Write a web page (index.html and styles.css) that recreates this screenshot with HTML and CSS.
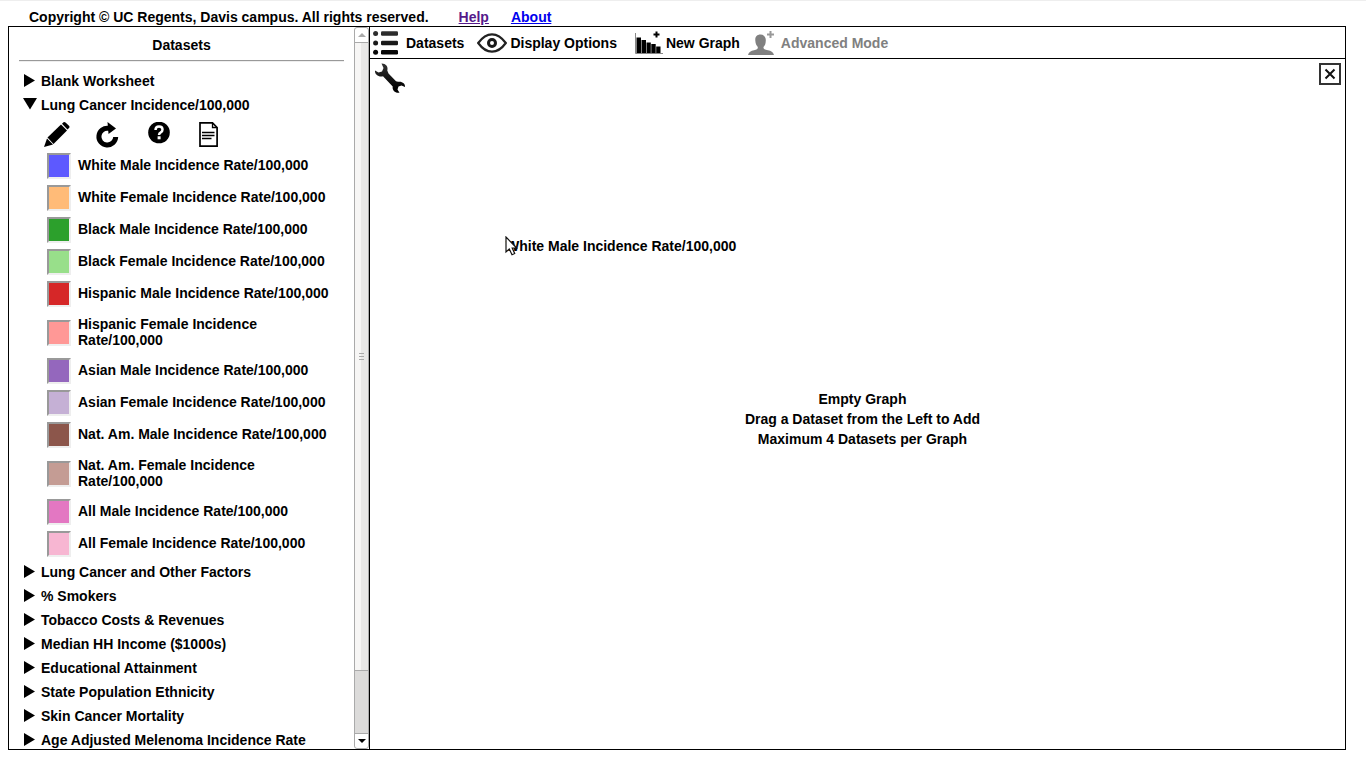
FILE: index.html
```html
<!DOCTYPE html>
<html lang="en">
<head>
<meta charset="utf-8">
<title>Datasets</title>
<link rel="stylesheet" href="styles.css">
</head>
<body>
<header class="top">
  <span class="copy">Copyright © UC Regents, Davis campus. All rights reserved.</span>
  <a class="visited" href="#help">Help</a>
  <a href="#about">About</a>
</header>
<div class="app">
  <aside class="side">
    <div class="list">
      <h2 class="title">Datasets</h2>
      <hr class="rule">
      <button class="cat"><svg class="tri" viewBox="0 0 14 14"><path d="M1 0L12 6.500L1 13Z"/></svg>Blank Worksheet</button>
      <button class="cat" aria-expanded="true"><svg class="tri" viewBox="0 0 14 14"><path d="M0 0H14L7 11.500Z"/></svg>Lung Cancer Incidence/100,000</button>
      <div class="tools">
        <button aria-label="Edit"><svg viewBox="0 0 26 26"><path d="M0 25L3 16.500L9 22.500Z"/><path d="M3.500 15.500L17 2.500L23 8.500L9.500 22Z"/><path d="M18 1.700L19.500 .3Q20.500 -.3 21.500 .5L25 3.800Q26 5 25 6L23.500 7.500Z"/></svg></button>
        <button aria-label="Reload"><svg viewBox="0 0 26 26"><path d="M15 6.300L13.500 6.300A8.400 8.400 0 1 0 20.700 15" fill="none" stroke="#000" stroke-width="5"/><path d="M12.500 0L21 6.500L13.500 12Z"/></svg></button>
        <button aria-label="About this dataset"><svg viewBox="0 0 26 26"><circle cx="13" cy="10.500" r="10.800"/><path d="M9.500 8Q9.500 4.500 13 4.500T16.500 7.500Q16.500 9.500 14.800 10.300T13 13" fill="none" stroke="#fff" stroke-width="2.500"/><rect x="11.600" y="14.300" width="3" height="3" fill="#fff"/></svg></button>
        <button aria-label="Worksheet"><svg viewBox="0 0 26 26"><path d="M3 .9H15.500L20.100 5.500V24.100H3Z" fill="#fff" stroke="#000" stroke-width="1.700"/><path d="M15.500 1V5.500H20M5 10.500H17.500M5 13.500H17.500M5 16.500H14.500" fill="none" stroke="#000" stroke-width="1.300"/></svg></button>
      </div>
      <div class="set"><button id="s1" class="swatch c1"></button><label for="s1">White Male Incidence Rate/100,000</label></div>
      <div class="set"><button id="s2" class="swatch c2"></button><label for="s2">White Female Incidence Rate/100,000</label></div>
      <div class="set"><button id="s3" class="swatch c3"></button><label for="s3">Black Male Incidence Rate/100,000</label></div>
      <div class="set"><button id="s4" class="swatch c4"></button><label for="s4">Black Female Incidence Rate/100,000</label></div>
      <div class="set"><button id="s5" class="swatch c5"></button><label for="s5">Hispanic Male Incidence Rate/100,000</label></div>
      <div class="set tall"><button id="s6" class="swatch c6"></button><label for="s6">Hispanic Female Incidence Rate/100,000</label></div>
      <div class="set"><button id="s7" class="swatch c7"></button><label for="s7">Asian Male Incidence Rate/100,000</label></div>
      <div class="set"><button id="s8" class="swatch c8"></button><label for="s8">Asian Female Incidence Rate/100,000</label></div>
      <div class="set"><button id="s9" class="swatch c9"></button><label for="s9">Nat. Am. Male Incidence Rate/100,000</label></div>
      <div class="set tall"><button id="s10" class="swatch c10"></button><label for="s10">Nat. Am. Female Incidence Rate/100,000</label></div>
      <div class="set"><button id="s11" class="swatch c11"></button><label for="s11">All Male Incidence Rate/100,000</label></div>
      <div class="set"><button id="s12" class="swatch c12"></button><label for="s12">All Female Incidence Rate/100,000</label></div>
      <button class="cat"><svg class="tri" viewBox="0 0 14 14"><path d="M1 0L12 6.500L1 13Z"/></svg>Lung Cancer and Other Factors</button>
      <button class="cat"><svg class="tri" viewBox="0 0 14 14"><path d="M1 0L12 6.500L1 13Z"/></svg>% Smokers</button>
      <button class="cat"><svg class="tri" viewBox="0 0 14 14"><path d="M1 0L12 6.500L1 13Z"/></svg>Tobacco Costs &amp; Revenues</button>
      <button class="cat"><svg class="tri" viewBox="0 0 14 14"><path d="M1 0L12 6.500L1 13Z"/></svg>Median HH Income ($1000s)</button>
      <button class="cat"><svg class="tri" viewBox="0 0 14 14"><path d="M1 0L12 6.500L1 13Z"/></svg>Educational Attainment</button>
      <button class="cat"><svg class="tri" viewBox="0 0 14 14"><path d="M1 0L12 6.500L1 13Z"/></svg>State Population Ethnicity</button>
      <button class="cat"><svg class="tri" viewBox="0 0 14 14"><path d="M1 0L12 6.500L1 13Z"/></svg>Skin Cancer Mortality</button>
      <button class="cat"><svg class="tri" viewBox="0 0 14 14"><path d="M1 0L12 6.500L1 13Z"/></svg>Age Adjusted Melenoma Incidence Rate</button>
    </div>
    <div class="scroll" aria-hidden="true">
      <div class="arrow up"><svg viewBox="0 0 8 4"><path d="M0 4L4 0L8 4Z" fill="#aaa"/></svg></div>
      <div class="thumb"><i></i><i></i><i></i></div>
      <div class="track"></div>
      <div class="arrow down"><svg viewBox="0 0 8 4"><path d="M0 0L4 4L8 0Z"/></svg></div>
    </div>
  </aside>
  <main class="main">
    <nav class="bar">
      <button class="b-list"><svg width="26" height="26" viewBox="0 0 26 26"><defs><linearGradient id="g" x1="0" y1="0" x2="0" y2="26" gradientUnits="userSpaceOnUse"><stop offset="0" stop-color="#333"/><stop offset="1" stop-color="#000"/></linearGradient></defs><g fill="url(#g)"><circle cx="2.600" cy="3.500" r="2.500"/><circle cx="2.600" cy="13" r="2.500"/><circle cx="2.600" cy="22.300" r="2.500"/><rect x="8" y="1.200" width="17" height="4.500" rx="1.200"/><rect x="8" y="10.700" width="17" height="4.500" rx="1.200"/><rect x="8" y="20" width="17" height="4.500" rx="1.200"/></g></svg>Datasets</button>
      <button class="b-eye"><svg width="30" height="20" viewBox="0 0 30 20"><path d="M1.200 10Q7.500 1.300 15 1.300T28.800 10Q22.500 18.700 15 18.700T1.200 10Z" fill="#fff" stroke="#222" stroke-width="2.200"/><circle cx="15" cy="10" r="3.500" fill="#fff" stroke="#1a1a1a" stroke-width="3"/></svg>Display Options</button>
      <button class="b-new"><svg width="28" height="24" viewBox="0 0 28 24"><path d="M.5 2V22.500H28" fill="none" stroke="#888"/><path d="M1.500 6.500H6V22H1.500ZM6.500 9H11V22H6.500ZM11.500 11.500H15.800V22H11.500ZM16.300 13H20.700V22H16.300ZM21.200 15.500H25.500V22H21.200Z"/><path d="M21.500 .5V6.500M18.500 3.500H24.500" stroke="#000" stroke-width="2"/></svg>New Graph</button>
      <button class="b-adv" disabled><svg width="26" height="24" viewBox="0 0 26 24"><g fill="#808080"><path d="M12.500 3.500C8.700 3.500 7 6 7.300 9.500C7.500 13 8.500 14.500 9.800 16C10 18 9 18.500 6 19.300C3 20 .8 21 0 24H26C25.200 21 23 20 20 19.300C16.500 18.500 15.300 18 15.500 16C17 14.500 17.700 13 17.800 9.500C18 6 16 3.500 12.500 3.500Z"/></g><path d="M22.500 0V7M19 3.500H26" stroke="#999" stroke-width="2"/></svg>Advanced Mode</button>
    </nav>
    <section class="graph">
      <div class="head">
        <button aria-label="Graph options"><svg width="32" height="32" viewBox="0 0 32 32"><path d="M7.500 .5C11.500 .3 14.500 3.500 13.300 7.500L14.500 10.500L22 18.300L24 18.800C28 18 31.500 20.500 31 24L27.500 22.500L24.500 23.500L23.500 26.500L25.500 29.700C21.500 30.500 18 27.500 18.700 23.500L9 13.300C5 14.500 .5 11.500 1 7.500L4.500 9.500L8 8.500L9.500 5Z" fill="url(#g)"/></svg></button>
        <button class="close" aria-label="Close"><svg width="12" height="12" viewBox="0 0 12 12"><path d="M1.500 1.500L10.500 10.500M10.500 1.500L1.500 10.500" stroke="#111" stroke-width="2"/></svg></button>
      </div>
      <p class="empty">Empty Graph<br>Drag a Dataset from the Left to Add<br>Maximum 4 Datasets per Graph</p>
      <div class="drag">White Male Incidence Rate/100,000<svg class="cursor" width="13" height="20" viewBox="0 0 13 20"><path d="M1 1V16L4.300 13L7 18.700L9.700 17.500L7.200 12H11.700Z" fill="#fff" stroke="#111" stroke-width="1.200"/></svg></div>
    </section>
  </main>
</div>
</body>
</html>
```
FILE: styles.css
```css
* { box-sizing: border-box; }
body {
  margin: 0;
  height: 100vh;
  padding: 0 20px 18px 8px;
  display: flex;
  flex-direction: column;
  background: linear-gradient(#eee 0 1px, #fff 1px);
  color: #000;
  font: bold 14px/16px "Liberation Sans", Arial, sans-serif;
}
button {
  margin: 0;
  padding: 0;
  border: 0;
  background: none;
  color: inherit;
  font: inherit;
  text-align: left;
}
svg { display: block; flex: none; }
.top {
  height: 26px;
  flex: none;
  display: flex;
  gap: 22px;
  padding: 9px 0 0 21px;
}
.copy { margin-right: 8px; }
.top a { color: #00e; }
.top a.visited { color: #551a8b; }
.app {
  flex: 1;
  min-height: 0;
  display: flex;
  border: 1px solid #000;
}
.side {
  width: 361px;
  flex: none;
  display: flex;
  border-right: 1px solid #000;
}
.list {
  flex: 1;
  min-width: 0;
  overflow: hidden;
  padding: 10px 10px 0;
}
.title { margin: 0 0 7px; font: inherit; text-align: center; }
.rule {
  margin: 0 0 7px;
  border: solid;
  border-width: 1px 0;
  border-color: #999 transparent #eee;
}
.cat {
  display: flex;
  align-items: center;
  width: 100%;
  height: 24px;
  padding-left: 4px;
  gap: 4px;
}
.tri { width: 14px; height: 14px; }
.tools {
  display: flex;
  gap: 25px;
  height: 33px;
  padding: 5px 0 0 25px;
}
.tools button { height: 26px; }
.tools svg { width: 26px; height: 26px; }
.set {
  display: flex;
  align-items: center;
  gap: 7px;
  height: 32px;
  padding: 0 5px 0 28px;
}
.set label { padding-bottom: 2px; }
.tall { height: 45px; }
.swatch {
  width: 24px;
  height: 26px;
  flex: none;
  border: 2px solid;
  border-color: #999 #eee #eee #999;
}
.c1 { background: #5d59ff; }
.c2 { background: #ffbb78; }
.c3 { background: #2ca02c; }
.c4 { background: #98df8a; }
.c5 { background: #d62728; }
.c6 { background: #ff9896; }
.c7 { background: #9467bd; }
.c8 { background: #c5b0d5; }
.c9 { background: #8c564b; }
.c10 { background: #c49c94; }
.c11 { background: #e377c2; }
.c12 { background: #f7b6d2; }
.scroll {
  width: 15px;
  flex: none;
  display: flex;
  flex-direction: column;
  border: 1px solid #aaa;
  border-radius: 3px;
}
.arrow {
  height: 14px;
  display: flex;
  align-items: center;
  justify-content: center;
}
.arrow svg { width: 8px; height: 4px; }
.thumb {
  flex: 1;
  display: flex;
  flex-direction: column;
  align-items: center;
  justify-content: center;
  gap: 2px;
  border: solid #aaa;
  border-width: 1px 0;
  background: linear-gradient(90deg, #f7f6f5 50%, #e9e8e7 50%);
}
.thumb i { width: 5px; height: 1px; background: #aaa; }
.track { height: 63px; background: #dcdbda; border-bottom: 1px solid #aaa; }
.main {
  flex: 1;
  min-width: 0;
  display: flex;
  flex-direction: column;
}
.bar {
  height: 32px;
  flex: none;
  display: flex;
  padding-left: 3px;
  border-bottom: 1px solid #000;
}
.bar button { display: flex; align-items: center; gap: 3px; }
.bar .b-list { gap: 7px; }
.bar .b-eye { margin-left: 13px; }
.bar .b-new { margin-left: 18px; }
.bar .b-adv { margin-left: 8px; gap: 7px; color: #808080; }
.graph {
  flex: 1;
  position: relative;
  display: flex;
  flex-direction: column;
}
.head {
  display: flex;
  justify-content: space-between;
  align-items: flex-start;
  padding: 4px 4px 0;
}
.close {
  width: 22px;
  height: 22px;
  display: grid;
  place-items: center;
  border: 2px solid #333;
}
.empty {
  flex: 1;
  display: grid;
  place-content: center;
  margin: 0;
  padding: 0 0 6px 10px;
  line-height: 20px;
  text-align: center;
}
.drag { position: absolute; left: 136px; top: 179px; }
.cursor { position: absolute; left: -1px; top: -2px; }
```
